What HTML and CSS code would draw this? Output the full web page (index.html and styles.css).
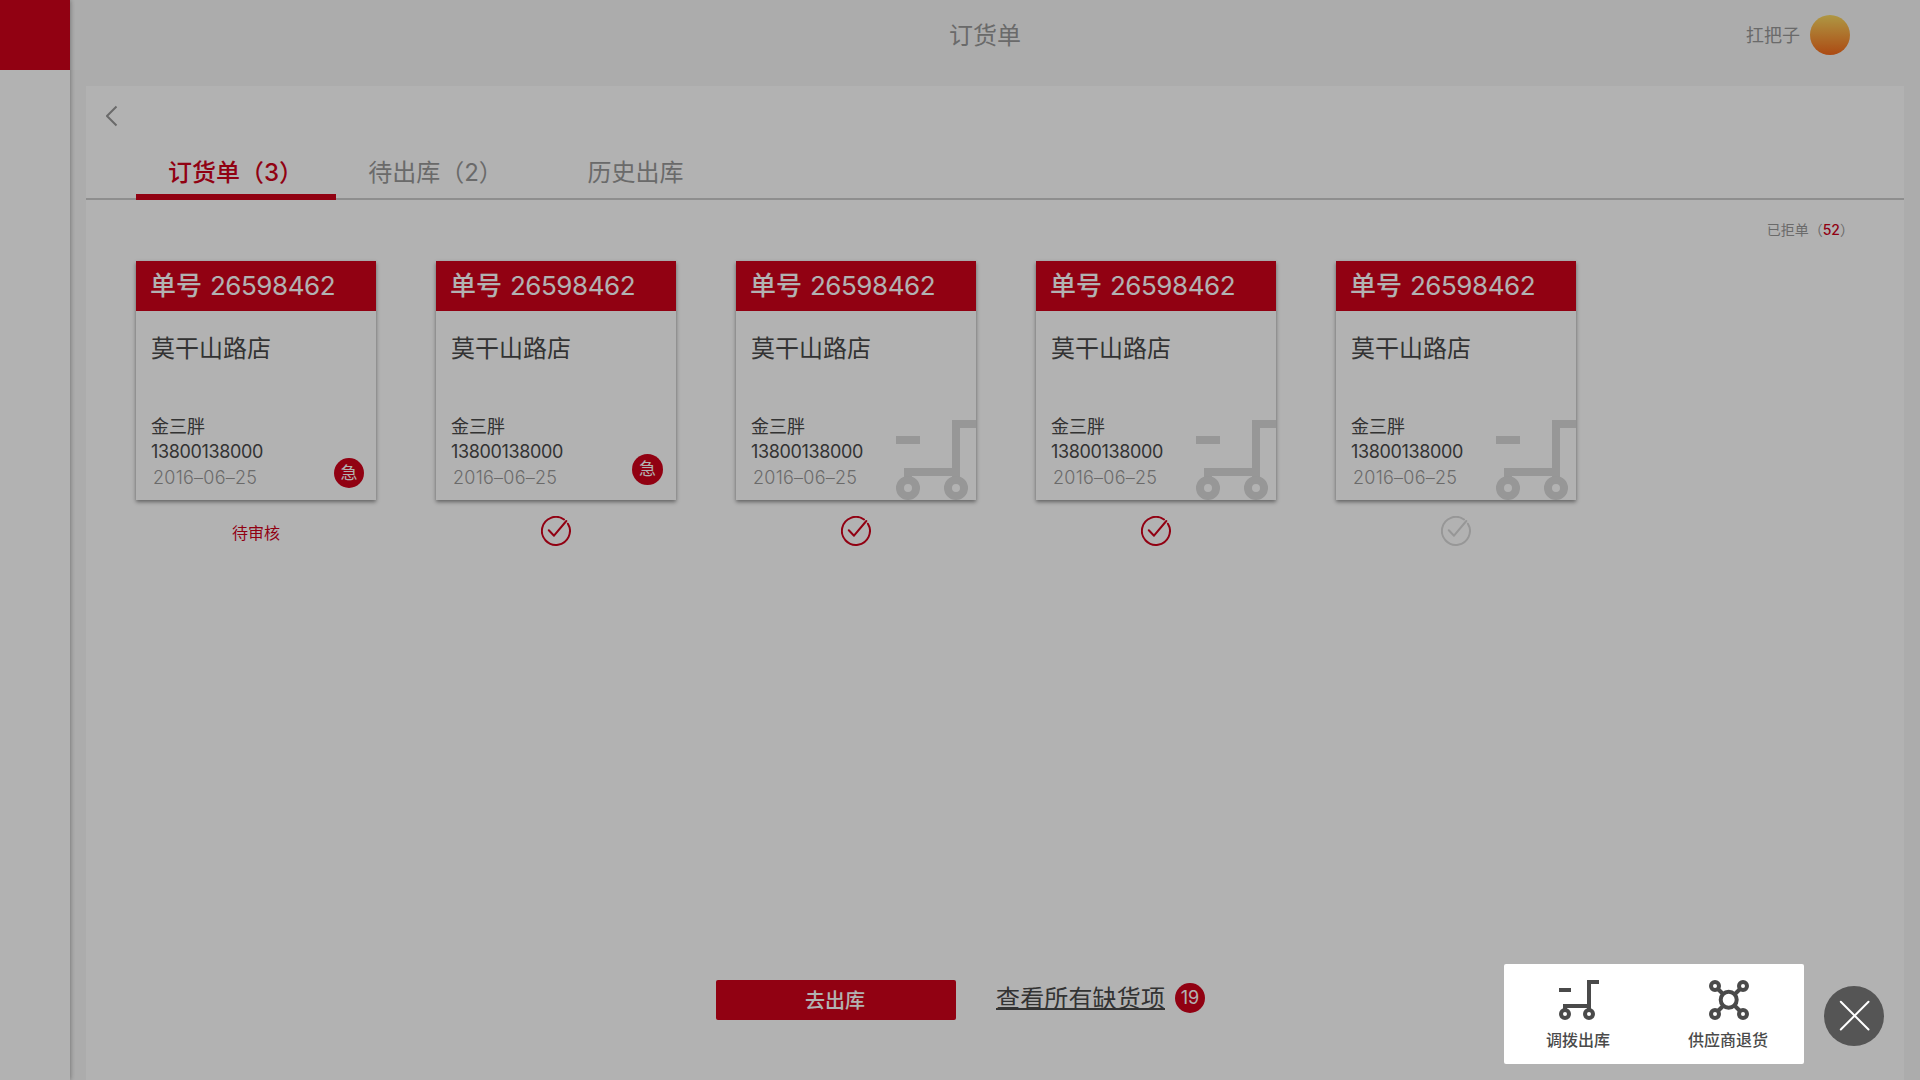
FILE: index.html
```html
<!DOCTYPE html>
<html lang="zh-CN">
<head>
<meta charset="utf-8">
<title>订货单</title>
<link rel="stylesheet" href="styles.css">
</head>
<body>
<svg class="defs" aria-hidden="true">
  <symbol id="cart" viewBox="0 0 40 40">
    <path d="M0 8h12v4H0zM4 24h24V0h12v4h-8v25h-4v-1H8v1H4z" fill="currentColor"/>
    <circle cx="6" cy="34" r="4" fill="none" stroke="currentColor" stroke-width="4"/>
    <circle cx="30" cy="34" r="4" fill="none" stroke="currentColor" stroke-width="4"/>
  </symbol>
  <symbol id="network" viewBox="0 0 40 40">
    <g fill="none" stroke="currentColor" stroke-width="4">
      <circle cx="6" cy="6" r="4"/><circle cx="34" cy="6" r="4"/>
      <circle cx="6" cy="34" r="4"/><circle cx="34" cy="34" r="4"/>
      <circle cx="19.7" cy="19.7" r="8"/>
      <path d="M9 9l5 5M31 9l-5 5M9 31l5-5M31 31l-5-5"/>
    </g>
  </symbol>
  <symbol id="check" viewBox="0 0 30 30">
    <path d="M26.900 7.700A14 14 0 1 1 23 3.500M7.800 14.300l5.200 5.400L25.300 5" fill="none" stroke="currentColor" stroke-width="2" stroke-linecap="round" stroke-linejoin="round"/>
  </symbol>
</svg>

<div class="app">
  <aside class="sidebar"><div class="brand"></div></aside>
  <div class="content">
    <header class="topbar">
      <span></span>
      <h1 class="title">订货单</h1>
      <div class="user"><span>扛把子</span><i class="avatar"></i></div>
    </header>
    <main class="panel">
      <div class="back">
        <svg width="12" height="22" viewBox="0 0 12 22"><path d="M10.500 1.500L1 11l9.500 9.500" fill="none" stroke="currentColor" stroke-width="2"/></svg>
      </div>
      <nav class="tabs">
        <a class="tab active">订货单（3）</a>
        <a class="tab">待出库（2）</a>
        <a class="tab">历史出库</a>
      </nav>
      <div class="rejected">已拒单（<b>52</b>）</div>
      <section class="orders">
        <div class="order">
          <article class="card">
            <h2 class="number">单号 <span class="digits">26598462</span></h2>
            <div class="store">莫干山路店</div>
            <div class="name">金三胖</div>
            <div class="phone">13800138000</div>
            <div class="date">2016–06–25</div>
            <span class="urgent">急</span>
          </article>
          <div class="status pending">待审核</div>
        </div>
        <div class="order">
          <article class="card">
            <h2 class="number">单号 <span class="digits">26598462</span></h2>
            <div class="store">莫干山路店</div>
            <div class="name">金三胖</div>
            <div class="phone">13800138000</div>
            <div class="date">2016–06–25</div>
            <span class="urgent raised">急</span>
          </article>
          <div class="status"><svg class="tick"><use href="#check"/></svg></div>
        </div>
        <div class="order">
          <article class="card">
            <h2 class="number">单号 <span class="digits">26598462</span></h2>
            <div class="store">莫干山路店</div>
            <div class="name">金三胖</div>
            <div class="phone">13800138000</div>
            <div class="date">2016–06–25</div>
            <svg class="watermark"><use href="#cart"/></svg>
          </article>
          <div class="status"><svg class="tick"><use href="#check"/></svg></div>
        </div>
        <div class="order">
          <article class="card">
            <h2 class="number">单号 <span class="digits">26598462</span></h2>
            <div class="store">莫干山路店</div>
            <div class="name">金三胖</div>
            <div class="phone">13800138000</div>
            <div class="date">2016–06–25</div>
            <svg class="watermark"><use href="#cart"/></svg>
          </article>
          <div class="status"><svg class="tick"><use href="#check"/></svg></div>
        </div>
        <div class="order">
          <article class="card">
            <h2 class="number">单号 <span class="digits">26598462</span></h2>
            <div class="store">莫干山路店</div>
            <div class="name">金三胖</div>
            <div class="phone">13800138000</div>
            <div class="date">2016–06–25</div>
            <svg class="watermark"><use href="#cart"/></svg>
          </article>
          <div class="status off"><svg class="tick"><use href="#check"/></svg></div>
        </div>
      </section>
      <footer class="actions">
        <button class="submit">去出库</button>
        <a class="shortage">查看所有缺货项</a>
        <span class="count">19</span>
      </footer>
    </main>
  </div>
</div>

<div class="overlay">
  <div class="menu">
    <div class="entry"><svg class="icon"><use href="#cart"/></svg><span>调拨出库</span></div>
    <div class="entry"><svg class="icon"><use href="#network"/></svg><span>供应商退货</span></div>
  </div>
  <div class="close">
    <svg width="60" height="60" viewBox="0 0 60 60"><path d="M16.800 15.800L44.500 43.500M44.500 15.800L16.800 43.500" stroke="#fff" stroke-width="2" stroke-linecap="round"/></svg>
  </div>
</div>
</body>
</html>
```
FILE: styles.css
```css
* { box-sizing: border-box; }

body {
  margin: 0;
  height: 1080px;
  overflow: hidden;
  background: #f7f7f7;
  color: #4a4a4a;
  font-family: Inter, "Noto Sans CJK SC", sans-serif;
}

h1, h2 { margin: 0; font-weight: 400; }

.defs { display: none; }

.app { display: flex; height: 1080px; }

.sidebar {
  width: 70px;
  background: #fff;
  box-shadow: 0 0 5px rgba(0, 0, 0, .4);
}

.brand { height: 70px; background: #d0021b; }

.content {
  flex: 1;
  display: flex;
  flex-direction: column;
  padding: 0 16px;
}

.topbar {
  height: 86px;
  padding: 0 54px 16px 0;
  display: grid;
  grid-template-columns: 863px 72px 1fr;
  align-items: center;
  color: #999;
}

.title { padding-top: 2px; font-size: 24px; line-height: 36px; }

.user {
  display: flex;
  justify-content: flex-end;
  align-items: center;
  gap: 10px;
  font-size: 18px;
  line-height: 26px;
}

.user span { padding-top: 2px; }

.avatar {
  width: 40px;
  height: 40px;
  border-radius: 50%;
  background: linear-gradient(#fad961, #f76b1c);
}

.panel {
  flex: 1;
  display: flex;
  flex-direction: column;
  background: #fff;
}

.back { height: 64px; padding: 19px 0 0 20px; color: #999; }
.back svg { display: block; }

.tabs {
  display: flex;
  height: 50px;
  padding-left: 49.5px;
  border-bottom: 2px solid #ccc;
}

.tab {
  width: 200px;
  height: 50px;
  padding-top: 5px;
  text-align: center;
  font-size: 24px;
  line-height: 36px;
  color: #999;
}

.tab.active {
  color: #d0021b;
  font-weight: 500;
  border-bottom: 6px solid #d0021b;
}

.rejected {
  height: 61px;
  padding: 20px 50px 0 0;
  text-align: right;
  font-size: 14px;
  line-height: 20px;
  color: #999;
}

.rejected b { color: #d0021b; font-weight: 500; }

.orders { display: flex; gap: 60px; padding-left: 50px; }

.order { width: 240px; }

.card {
  position: relative;
  height: 239px;
  background: #fff;
  box-shadow: 0 2px 4px rgba(0, 0, 0, .45);
}

.number {
  height: 50px;
  padding-left: 14px;
  background: #d0021b;
  color: #fff;
  font-size: 26px;
  line-height: 50px;
  font-weight: 500;
}

.digits { margin-left: 1px; font-weight: 400; letter-spacing: -.45px; }

.store {
  padding: 20px 15px 0;
  height: 100px;
  font-size: 24px;
  line-height: 36px;
}

.name, .phone, .date { padding-left: 15px; font-size: 18px; line-height: 26px; }
.name { height: 27px; padding-top: 3px; }
.phone { height: 25px; padding-top: 1px; letter-spacing: -.35px; }
.date { padding-left: 17px; height: 26px; padding-top: 2px; font-weight: 300; letter-spacing: .25px; color: #999; }

.urgent {
  position: absolute;
  right: 12px;
  bottom: 12px;
  width: 30px;
  height: 30px;
  border-radius: 50%;
  background: #d0021b;
  color: #fff;
  font-size: 17px;
  line-height: 30px;
  text-align: center;
}

.urgent.raised { right: 13px; bottom: 15px; width: 31px; height: 31px; line-height: 31px; }

.watermark {
  position: absolute;
  right: 0;
  bottom: 0;
  width: 80px;
  height: 80px;
  color: #d8d8d8;
}

.status {
  height: 46px;
  padding-top: 16px;
  display: flex;
  justify-content: center;
  color: #d0021b;
  font-size: 16px;
  line-height: 34px;
}

.status.off { color: #d8d8d8; }
.tick { width: 30px; height: 30px; }

.actions {
  margin-top: auto;
  height: 100px;
  padding-left: 630px;
  display: flex;
  align-items: flex-start;
}

.submit {
  width: 240px;
  height: 40px;
  padding: 0 2px 2px 0;
  border: 0;
  border-radius: 2px;
  background: #d0021b;
  color: #fff;
  font-family: inherit;
  font-size: 20px;
  font-weight: 500;
}

.shortage {
  margin-left: 40px;
  width: 169px;
  height: 30px;
  font-size: 24px;
  line-height: 37px;
  letter-spacing: .15px;
  white-space: nowrap;
  border-bottom: 2px solid #4a4a4a;
}

.count {
  margin: 3px 0 0 10px;
  width: 30px;
  height: 30px;
  border-radius: 50%;
  background: #d0021b;
  color: #fff;
  font-size: 18px;
  line-height: 30px;
  text-align: center;
}

.overlay {
  position: absolute;
  inset: 0;
  display: flex;
  justify-content: flex-end;
  align-items: flex-end;
  gap: 20px;
  padding: 0 36px 16px 0;
  background: rgba(0, 0, 0, .3);
}

.menu {
  display: flex;
  width: 300px;
  height: 100px;
  border-radius: 2px;
  background: #fff;
}

.entry {
  width: 150px;
  padding-top: 16px;
  display: flex;
  flex-direction: column;
  align-items: center;
  font-size: 16px;
  line-height: 24px;
  font-weight: 500;
}

.entry span { padding: 8px 2px 0 0; }
.icon { width: 40px; height: 40px; }

.close {
  width: 60px;
  height: 60px;
  margin-bottom: 18px;
  border-radius: 50%;
  background: #555;
}
```
